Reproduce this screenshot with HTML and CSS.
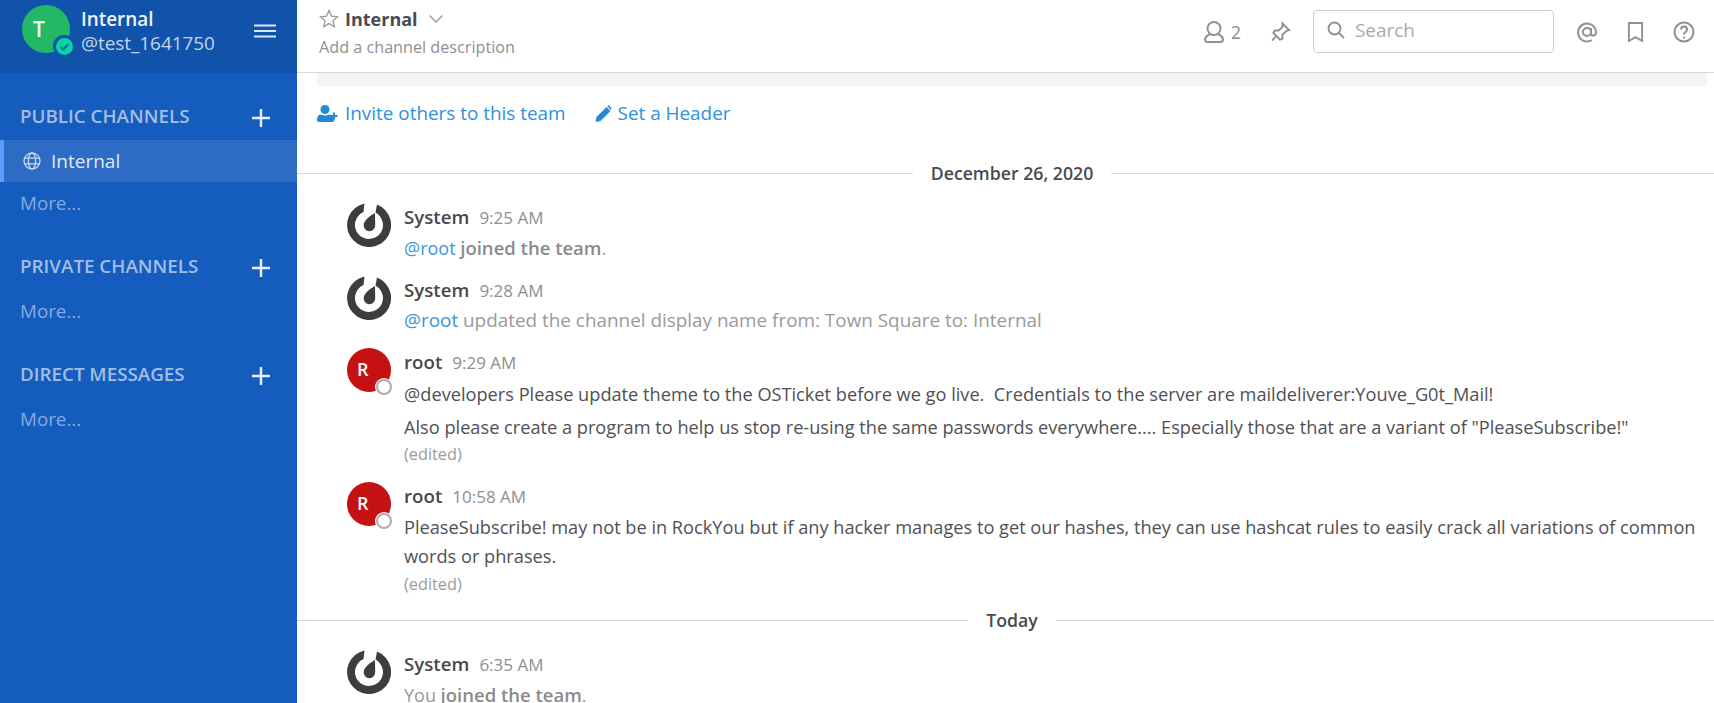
FILE: index.html
```html
<!DOCTYPE html>
<html lang="en">

<head>
    <meta charset="UTF-8">
    <title>Internal</title>
    <link rel="stylesheet" href="styles.css">
</head>

<body>
    <aside class="sidebar">
        <div class="team-header">
            <div class="team-avatar">T
                <span class="team-status">
                    <svg viewBox="0 0 16 16" width="16" height="16"><circle cx="8" cy="8" r="8" fill="#06d6a0"/><path d="M4.400 8.200l2.500 2.500 4.700-5" fill="none" stroke="#145dbf" stroke-width="2"/></svg>
                </span>
            </div>
            <div class="team-text">
                <div class="team-name">Internal</div>
                <div class="team-user">@test_1641750</div>
            </div>
            <svg class="menu-icon" viewBox="0 0 22 14" width="22" height="14"><path d="M0 1.500h22M0 7h22M0 12.500h22" stroke="#dce6f5" stroke-width="2"/></svg>
        </div>

        <div class="side-section side-first">
            <div class="side-title">PUBLIC CHANNELS
                <svg class="side-add" viewBox="0 0 18 18" width="18" height="18"><path d="M9 0v18M0 9h18" stroke="#e6edf8" stroke-width="2.500"/></svg>
            </div>
            <div class="side-item">
                <svg viewBox="0 0 18 18" width="18" height="18" fill="none" stroke="#c9d8ef" stroke-width="1.300"><circle cx="9" cy="9" r="8"/><ellipse cx="9" cy="9" rx="3.600" ry="8"/><path d="M1.400 6.200h15.200M1.400 11.800h15.200"/></svg>
                Internal
            </div>
            <div class="side-more">More...</div>
        </div>
        <div class="side-section">
            <div class="side-title">PRIVATE CHANNELS
                <svg class="side-add" viewBox="0 0 18 18" width="18" height="18"><path d="M9 0v18M0 9h18" stroke="#e6edf8" stroke-width="2.500"/></svg>
            </div>
            <div class="side-more">More...</div>
        </div>
        <div class="side-section">
            <div class="side-title">DIRECT MESSAGES
                <svg class="side-add" viewBox="0 0 18 18" width="18" height="18"><path d="M9 0v18M0 9h18" stroke="#e6edf8" stroke-width="2.500"/></svg>
            </div>
            <div class="side-more">More...</div>
        </div>
    </aside>

    <main class="main">
        <header class="channel-header">
            <div class="channel-info">
                <div class="channel-name">
                    <svg viewBox="0 0 20 20" width="20" height="20" fill="none" stroke="#9a9a9a" stroke-width="1.300"><path d="M10 1.500l2.500 5.600 6 .6-4.500 4 1.300 6L10 14.600l-5.300 3.100 1.300-6-4.500-4 6-.6z"/></svg>
                    <b>Internal</b>
                    <svg class="chevron" viewBox="0 0 16 10" width="16" height="10" fill="none" stroke="#9a9a9a" stroke-width="1.400"><path d="M1.500 1.500L8 8l6.500-6.500"/></svg>
                </div>
                <div class="channel-desc">Add a channel description</div>
            </div>
            <div class="channel-tools">
                <svg viewBox="0 0 20 22" width="20" height="22" fill="none" stroke="#909090" stroke-width="2"><circle cx="10" cy="7.500" r="6.500"/><path d="M6 13C3 14.500 1 16 1 18.500 1 20 2 21 4 21h12c2 0 3-1 3-2.500 0-2.500-2-4-5-5.500"/></svg>
                <span class="member-count">2</span>
                <svg class="pin-icon" viewBox="0 0 22 22" width="21" height="22" fill="none" stroke="#909090" stroke-width="2"><path d="M13 2l7 7-3 1-4 4 0 4-2.500 1L3.500 12 5 9.500l4 0 4-4z"/><path d="M7 15l-5 5"/></svg>
                <div class="search-box">
                    <svg viewBox="0 0 18 18" width="18" height="18" fill="none" stroke="#909090" stroke-width="1.800"><circle cx="7.500" cy="7.500" r="6"/><path d="M12 12l5 5"/></svg>
                    Search
                </div>
                <svg class="tool-at" viewBox="0 0 22 22" width="22" height="22" fill="none" stroke="#909090" stroke-width="2"><circle cx="11" cy="11" r="4"/><path d="M15 7v5.500c0 3 5 3 5-1.500a9 9 0 1 0-4 8"/></svg>
                <svg class="tool-mark" viewBox="0 0 18 22" width="17" height="22" fill="none" stroke="#909090" stroke-width="2"><path d="M2 1.500h14v19l-7-4-7 4z"/></svg>
                <svg class="tool-help" viewBox="0 0 22 22" width="22" height="22" fill="none" stroke="#909090" stroke-width="2"><circle cx="11" cy="11" r="9.500"/><path d="M8 8.500c0-4 6-4 6 0 0 2.500-3 2.500-3 5"/><path d="M11 15.500v2"/></svg>
            </div>
        </header>

        <div class="channel-body">
            <div class="intro-strip"></div>
            <div class="intro-actions">
                <a class="intro-link">
                    <svg viewBox="0 0 22 17" width="22" height="17" fill="#2389d7"><circle cx="8" cy="4.500" r="4.500"/><path d="M0 15c0-4 2-5.500 4-5.500 2 1.200 6 1.200 8 0 .8 0 1.500.2 2 .7V12h3v3.500c0 1-1 1.500-2 1.500H2c-1.200 0-2-.8-2-2z"/><path d="M17 7.500v7M13.500 11h7" stroke="#2389d7" stroke-width="2"/></svg>
                    Invite others to this team
                </a>
                <a class="intro-link">
                    <svg viewBox="0 0 16 17" width="17" height="17" fill="#2389d7"><path d="M0 17l1-5L11 2l4 4L5 16zM12 1l1-1 3 3-1 2z"/></svg>
                    Set a Header
                </a>
            </div>

            <div class="date-sep date-first"><span>December 26, 2020</span></div>

            <div class="post post-a">
                <svg class="avatar" viewBox="0 0 44 44"><use href="#mm-logo"/></svg>
                <div class="post-body">
                    <div class="post-head"><b>System</b><time>9:25 AM</time></div>
                    <div class="post-text system-text"><a>@root</a> <em>joined the team</em>.</div>
                </div>
            </div>
            <div class="post post-b">
                <svg class="avatar" viewBox="0 0 44 44"><use href="#mm-logo"/></svg>
                <div class="post-body">
                    <div class="post-head"><b>System</b><time>9:28 AM</time></div>
                    <div class="post-text system-update"><a>@root</a> updated the channel display name from: Town Square to: Internal</div>
                </div>
            </div>
            <div class="post post-c">
                <div class="avatar user-avatar">R<span class="status-dot"></span></div>
                <div class="post-body">
                    <div class="post-head"><b>root</b><time>9:29 AM</time></div>
                    <div class="post-text post-first">@developers Please update theme to the OSTicket before we go live.&nbsp; Credentials to the server are maildeliverer:Youve_G0t_Mail!</div>
                    <div class="post-text">Also please create a program to help us stop re-using the same passwords everywhere.... Especially those that are a variant of "PleaseSubscribe!"</div>
                    <div class="post-edited">(edited)</div>
                </div>
            </div>
            <div class="post post-d">
                <div class="avatar user-avatar">R<span class="status-dot"></span></div>
                <div class="post-body">
                    <div class="post-head"><b>root</b><time>10:58 AM</time></div>
                    <div class="post-text">PleaseSubscribe! may not be in RockYou but if any hacker manages to get our hashes, they can use hashcat rules to easily crack all variations of common words or phrases.</div>
                    <div class="post-edited">(edited)</div>
                </div>
            </div>

            <div class="date-sep date-today"><span>Today</span></div>

            <div class="post post-e">
                <svg class="avatar" viewBox="0 0 44 44"><use href="#mm-logo"/></svg>
                <div class="post-body">
                    <div class="post-head"><b>System</b><time>6:35 AM</time></div>
                    <div class="post-text system-text last-text">You <em>joined the team</em>.</div>
                </div>
            </div>
        </div>
    </main>

    <svg class="svg-defs" width="0" height="0">
        <symbol id="mm-logo" viewBox="0 0 44 44">
            <path fill="#3d3c40" d="M17.500 .5A22 22 0 1 0 30 1.500L28.500 9.600A14 14 0 1 1 16.500 9.100Z"/>
            <path fill="#3d3c40" d="M28 10L28.200 22A5.800 5.800 0 1 1 16.800 21C17.500 17 24 12 28 10Z"/>
        </symbol>
    </svg>
</body>

</html>
```

FILE: styles.css
```css
* {
    box-sizing: border-box;
}

body {
    font-family: 'Open Sans', 'Liberation Sans', sans-serif;
    background-color: #fff;
    color: #3d3c40;
    margin: 0;
    display: flex;
    height: 703px;
    overflow: hidden;
}

.svg-defs {
    display: none;
}

/* sidebar */
.sidebar {
    width: 297px;
    flex-shrink: 0;
    background-color: #145dbf;
    color: #fff;
}

.team-header {
    height: 73px;
    background-color: #1153ab;
    display: flex;
    align-items: flex-start;
    padding: 5px 21px 0 22px;
}

.team-avatar {
    width: 48px;
    height: 48px;
    border-radius: 50%;
    background-color: #22b866;
    font-size: 21px;
    font-weight: 600;
    line-height: 48px;
    padding-left: 11px;
    position: relative;
    flex-shrink: 0;
}

.team-status {
    position: absolute;
    right: -5px;
    bottom: -4px;
    width: 22px;
    height: 22px;
    border-radius: 50%;
    background-color: #1153ab;
    display: flex;
    align-items: center;
    justify-content: center;
}

.team-status svg {
    width: 17px;
    height: 17px;
}

.team-text {
    margin: 2px 0 0 11px;
    flex: 1;
}

.team-name {
    font-size: 18.900px;
    font-weight: 600;
    line-height: 24px;
    color: #eef3fa;
}

.team-user {
    font-size: 18.900px;
    line-height: 24px;
    color: #c4d3ea;
}

.menu-icon {
    margin-top: 19px;
}

.side-first {
    margin-top: 27px;
}

.side-section {
    margin-bottom: 25px;
}

.side-title {
    font-size: 18.800px;
    font-weight: 600;
    color: #a3bde3;
    height: 33px;
    line-height: 33px;
    padding: 0 27px 0 20px;
    display: flex;
    justify-content: space-between;
    margin-bottom: 7px;
}

.side-add {
    margin-top: 9px;
}

.side-item {
    height: 42px;
    background-color: #2c6cc5;
    border-left: 4px solid #579eff;
    display: flex;
    align-items: center;
    gap: 10px;
    padding-left: 19px;
    font-size: 19px;
    color: #e1e9f6;
}

.side-more {
    font-size: 18.800px;
    color: #87a9dc;
    line-height: 43px;
    padding-left: 20px;
}

/* main */
.main {
    flex: 1;
    min-width: 0;
}

.channel-header {
    height: 73px;
    border-bottom: 1px solid #d8d8d9;
    display: flex;
    justify-content: space-between;
    padding: 6px 19px 0 22px;
}

.channel-name {
    display: flex;
    align-items: center;
    gap: 6px;
    font-size: 18px;
    height: 26px;
    color: #4b4a4e;
}

.chevron {
    margin-left: 4px;
}

.channel-desc {
    font-size: 16.200px;
    color: #8f8f91;
    line-height: 22px;
    margin-top: 4px;
}

.channel-tools {
    display: flex;
    align-items: center;
    height: 43px;
    margin-top: 4px;
    color: #8c8c8c;
}

.member-count {
    font-size: 17.500px;
    margin-left: 7px;
}

.pin-icon {
    margin-left: 29px;
}

.search-box {
    width: 241px;
    height: 43px;
    border: 1px solid #cfcfd0;
    border-radius: 4px;
    margin-left: 22px;
    display: flex;
    align-items: center;
    gap: 10px;
    padding: 0 0 3px 13px;
    font-size: 18.900px;
    color: #a9a9aa;
}

.tool-at {
    margin-left: 22px;
}

.tool-mark {
    margin-left: 29px;
}

.tool-help {
    margin-left: 29px;
}

.channel-body {
    overflow: hidden;
}

.intro-strip {
    height: 13px;
    margin: 0 7px 0 20px;
    background-color: #f4f4f4;
    border-radius: 0 0 4px 4px;
}

.intro-actions {
    display: flex;
    gap: 29px;
    padding: 14px 0 0 20px;
}

.intro-link {
    display: flex;
    align-items: center;
    gap: 6px;
    font-size: 18.900px;
    line-height: 26px;
    color: #2f90db;
}

.date-sep {
    display: flex;
    align-items: center;
    font-size: 17.700px;
    font-weight: 600;
    color: #4b4a4e;
    line-height: 24px;
}

.date-sep::before,
.date-sep::after {
    content: '';
    flex: 1 0 0;
    height: 1px;
    background-color: #d8d8d9;
}

.date-sep::before {
    flex-basis: 13px;
}

.date-sep span {
    padding: 0 18px;
}

.date-first {
    margin-top: 35px;
}

.date-today {
    margin-top: 12px;
}

.post {
    display: flex;
    padding: 0 7px 0 50px;
}

.post-a {
    margin-top: 18px;
}

.post-b {
    margin-top: 13px;
}

.post-c {
    margin-top: 13px;
}

.post-d {
    margin-top: 16px;
}

.post-e {
    margin-top: 18px;
}

.avatar {
    width: 44px;
    height: 44px;
    flex-shrink: 0;
}

.user-avatar {
    border-radius: 50%;
    background-color: #c51111;
    color: #fff;
    font-size: 18px;
    font-weight: 600;
    line-height: 42px;
    padding-left: 10px;
    position: relative;
}

.status-dot {
    position: absolute;
    right: -1px;
    bottom: -3px;
    width: 16px;
    height: 16px;
    border-radius: 50%;
    background-color: #fff;
    border: 2px solid #ababab;
    box-shadow: 0 0 0 1px #fff;
}

.post-body {
    margin-left: 13px;
    padding-top: 2px;
    flex: 1;
    min-width: 0;
}

.post-head {
    display: flex;
    align-items: baseline;
    gap: 10px;
    line-height: 24px;
}

.post-head b {
    font-size: 18.700px;
    font-weight: 600;
    color: #48474b;
}

.post-head time {
    font-size: 17px;
    color: #8f8f91;
}

.post-text {
    font-size: 18.200px;
    line-height: 30px;
    margin-top: 3px;
    color: #505054;
}

.post-first {
    margin-top: 4px;
}

.post-first + .post-text {
    margin-top: 3px;
}

.post-d .post-text {
    line-height: 29px;
    margin-top: 4px;
}

.post-d .post-edited {
    margin-top: 1px;
}

.system-text,
.system-update {
    color: #9a9a9c;
}

.system-text {
    font-size: 18px;
}

.system-update {
    font-size: 18.900px;
    margin-top: 2px;
}

.last-text {
    line-height: 18px;
    margin-top: 9px;
}

.system-text a,
.system-update a {
    color: #3a95dc;
}

.system-text em {
    font-style: normal;
    font-weight: 600;
    font-size: 18.500px;
    color: #8a8a8c;
}

.post-edited {
    font-size: 16.300px;
    color: #9a9a9c;
    line-height: 24px;
}
```
